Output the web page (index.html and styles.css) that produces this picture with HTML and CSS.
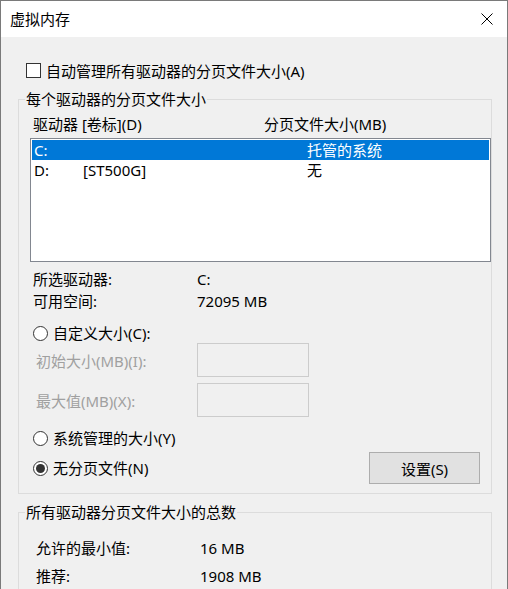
FILE: index.html
```html
<!DOCTYPE html>
<html lang="zh-CN">
<head>
<meta charset="utf-8">
<title>虚拟内存</title>
<link rel="stylesheet" href="styles.css">
</head>
<body>
<div class="window">
  <div class="titlebar">
    <span class="title">虚拟内存</span>
    <svg class="close" width="12" height="12" viewBox="0 0 12 12"><path d="M0.5 0.5 L11.5 11.5 M11.5 0.5 L0.5 11.5" stroke="#000" stroke-width="1" fill="none"/></svg>
  </div>
  <div class="content">
    <div class="check-row">
      <span class="checkbox"></span>
      <span>自动管理所有驱动器的分页文件大小(A)</span>
    </div>
    <fieldset class="group group1">
      <legend>每个驱动器的分页文件大小</legend>
      <div class="list-head">
        <span class="col-drive">驱动器 [卷标](D)</span>
        <span>分页文件大小(MB)</span>
      </div>
      <div class="listbox">
        <div class="list-row selected">
          <span class="c1">C:</span><span class="c2"></span><span class="c3">托管的系统</span>
        </div>
        <div class="list-row">
          <span class="c1">D:</span><span class="c2">[ST500G]</span><span class="c3">无</span>
        </div>
      </div>
      <div class="info-row first"><span class="lbl">所选驱动器:</span><span>C:</span></div>
      <div class="info-row"><span class="lbl">可用空间:</span><span>72095 MB</span></div>
      <div class="radio-row r-custom"><span class="radio"></span><span>自定义大小(C):</span></div>
      <div class="field-row"><span class="lbl disabled">初始大小(MB)(I):</span><span class="input"></span></div>
      <div class="field-row f2"><span class="lbl disabled">最大值(MB)(X):</span><span class="input"></span></div>
      <div class="radio-row r-system"><span class="radio"></span><span>系统管理的大小(Y)</span></div>
      <div class="last-row">
        <div class="radio-row"><span class="radio checked"></span><span>无分页文件(N)</span></div>
        <span class="button">设置(S)</span>
      </div>
    </fieldset>
    <fieldset class="group group2">
      <legend>所有驱动器分页文件大小的总数</legend>
      <div class="total-row first"><span class="lbl">允许的最小值:</span><span>16 MB</span></div>
      <div class="total-row"><span class="lbl">推荐:</span><span>1908 MB</span></div>
    </fieldset>
  </div>
</div>
</body>
</html>
```
FILE: styles.css
```css
html, body {
  margin: 0;
  padding: 0;
  background: #f0f0f0;
}
.window {
  width: 508px;
  height: 589px;
  box-sizing: border-box;
  border: 1px solid #7a7a7a;
  border-bottom: none;
  overflow: hidden;
  background: #f0f0f0;
  font-family: "Noto Sans", "Noto Sans CJK SC", sans-serif;
  font-size: 15px;
  color: #000;
}
.titlebar {
  height: 36px;
  background: #fff;
  display: flex;
  align-items: center;
  justify-content: space-between;
  padding: 0 14px 0 9px;
}
.title {
  line-height: 20px;
}
.close {
  display: block;
}
.content {
  padding: 0 15px 0 17px;
}
.check-row {
  display: flex;
  align-items: center;
  height: 20px;
  margin-top: 24px;
  line-height: 20px;
}
.checkbox {
  width: 13px;
  height: 13px;
  border: 1px solid #333;
  background: #fff;
  margin: 0 5px 0 8px;
  position: relative;
  top: -1px;
}
.group {
  margin: 0;
  padding: 0;
  border: 1px solid #dcdcdc;
  width: 474px;
  box-sizing: border-box;
  min-width: 0;
}
.group legend {
  margin-left: 6px;
  padding: 0 1px;
  line-height: 20px;
}
.group1 {
  margin-top: 8px;
  padding-bottom: 9px;
}
.list-head {
  display: flex;
  height: 20px;
  line-height: 20px;
  margin-top: 5px;
  padding-left: 14px;
}
.col-drive {
  width: 231px;
}
.listbox {
  margin: 4px 0 0 11px;
  width: 461px;
  height: 124px;
  box-sizing: border-box;
  border: 1px solid #828790;
  background: #fff;
  padding: 1px;
}
.list-row {
  display: flex;
  height: 20px;
  line-height: 20px;
  padding-left: 2px;
}
.list-row.selected {
  background: #0078d7;
  color: #fff;
}
.c1 { width: 49px; }
.c2 { width: 224px; }
.info-row {
  display: flex;
  height: 22px;
  line-height: 22px;
  padding-left: 14px;
}
.info-row.first {
  margin-top: 6px;
}
.lbl {
  width: 164px;
}
.radio-row {
  display: flex;
  align-items: center;
  height: 20px;
  line-height: 20px;
  padding-left: 14px;
}
.radio {
  width: 13px;
  height: 13px;
  border: 1px solid #333;
  border-radius: 50%;
  background: #fff;
  margin-right: 5px;
  position: relative;
}
.radio.checked::after {
  content: "";
  position: absolute;
  left: 2px;
  top: 2px;
  width: 9px;
  height: 9px;
  border-radius: 50%;
  background: #333;
}
.r-custom {
  margin-top: 11px;
}
.field-row {
  display: flex;
  align-items: center;
  height: 34px;
  padding-left: 17px;
}
.field-row .lbl {
  width: 161px;
}
.field-row.f2 {
  margin-top: 6px;
}
.disabled {
  color: #a0a0a0;
}
.input {
  width: 112px;
  height: 34px;
  box-sizing: border-box;
  border: 1px solid #cccccc;
  background: #f0f0f0;
}
.r-system {
  margin-top: 11px;
}
.last-row {
  display: flex;
  align-items: center;
  justify-content: space-between;
  height: 32px;
  margin-top: 4px;
  padding-right: 11px;
}
.button {
  width: 111px;
  height: 32px;
  box-sizing: border-box;
  border: 1px solid #adadad;
  background: #e1e1e1;
  display: flex;
  align-items: center;
  justify-content: center;
}
.group2 {
  margin-top: 8px;
  height: 120px;
}
.total-row {
  display: flex;
  height: 28px;
  line-height: 28px;
  padding-left: 17px;
}
.total-row .lbl {
  width: 164px;
}
.total-row.first {
  margin-top: 12px;
}
```
